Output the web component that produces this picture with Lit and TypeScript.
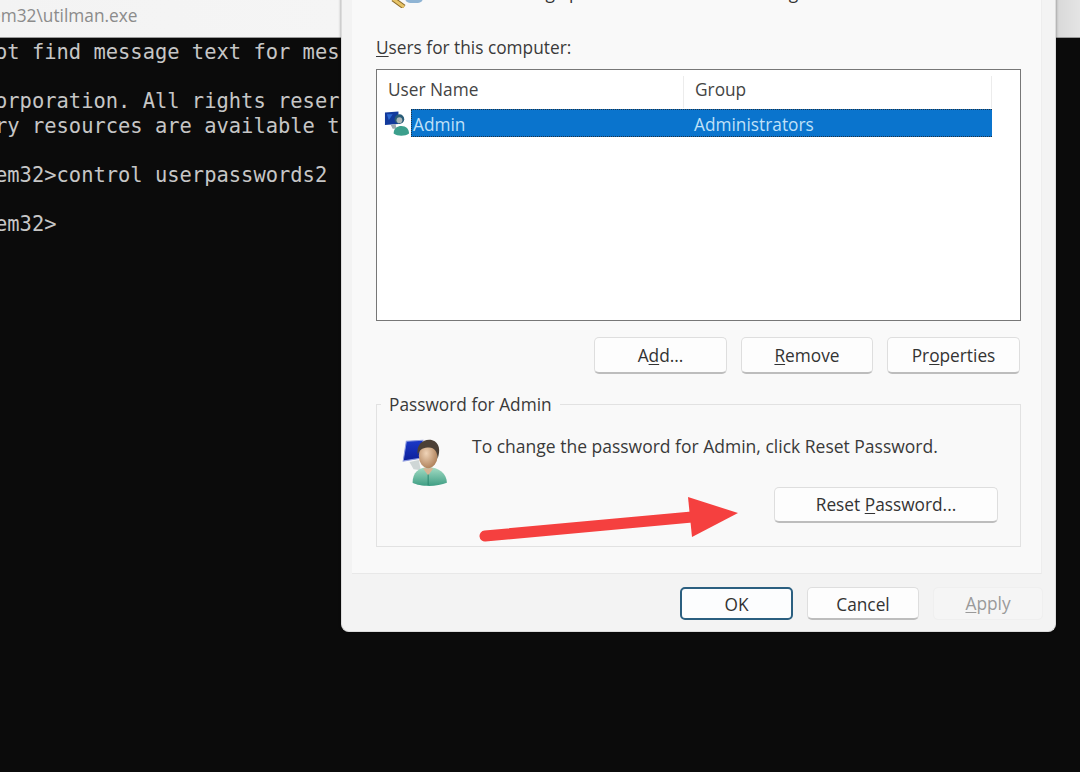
import { LitElement, html, css } from "lit";
import { customElement } from "lit/decorators.js";

const userIcon = html`
  <svg class="user" width="52" height="52" viewBox="0 0 50 50" aria-hidden="true">
    <defs>
      <linearGradient id="scr" x1="0" y1="0" x2="0" y2="1">
        <stop offset="0" stop-color="#1b39c8" />
        <stop offset="1" stop-color="#0d1f9a" />
      </linearGradient>
      <radialGradient id="face" cx="0.4" cy="0.4" r="0.7">
        <stop offset="0" stop-color="#f0d4b8" />
        <stop offset="1" stop-color="#a87850" />
      </radialGradient>
      <linearGradient id="shirt" x1="0" y1="0" x2="0" y2="1">
        <stop offset="0" stop-color="#a4dcc4" />
        <stop offset="1" stop-color="#3f9e84" />
      </linearGradient>
    </defs>
    <path d="M8 6 L24 5 L24 22 L5 25 Z" fill="url(#scr)" stroke="#8d9be0" stroke-width="1" />
    <path d="M11 26 L20 24 L22 34 L15 33 Z" fill="#cfd6d6" />
    <path d="M14 46 C14 36 20 31 29 31 C39 31 47 37 47 46 C38 50 21 50 14 46 Z" fill="url(#shirt)" />
    <path d="M24 32 L29 39 L34 32 Z" fill="#d8b494" />
    <path d="M29 38 L29 48" stroke="#2f8a72" stroke-width="1" />
    <ellipse cx="29" cy="20" rx="9" ry="12" fill="url(#face)" />
    <path d="M19 19 C17 8 26 3 33 5 C40 7 41 15 38 23 C38 16 35 12 30 12 C25 12 21 13 19 19 Z" fill="#4c4036" />
  </svg>
`;

const smallIcon = html`
  <svg width="26" height="27" viewBox="0 0 27 27" aria-hidden="true">
    <path d="M1 2 L15 1 L15 14 L1 15 Z" fill="#123a9c" />
    <path d="M3 4 L9 4 L5 10 Z" fill="#2b68d0" />
    <path d="M7 15 L12 14 L13 19 L9 19 Z" fill="#9aa8b0" />
    <circle cx="16" cy="9" r="5" fill="#2a5d78" />
    <circle cx="16" cy="10" r="3" fill="#aeb8b8" />
    <path d="M10 24 C10 18 14 16 18 16 C23 16 26 19 26 24 C22 27 14 27 10 24 Z" fill="#3c9f8c" />
  </svg>
`;

@customElement("app-root")
export class AppRoot extends LitElement {
  static styles = css`
    :host {
      display: block;
      width: 1080px;
      height: 772px;
      position: relative;
      overflow: hidden;
      background: #0b0b0b;
      font-family: "Open Sans", "Noto Sans", sans-serif;
      color: #333;
    }
    .terminal {
      display: flex;
      flex-direction: column;
      height: 100%;
    }
    .titlebar {
      height: 38px;
      flex: none;
      box-sizing: border-box;
      background: linear-gradient(90deg, #f3f3f3 0, #f5f5f5 340px, #d8d8d8 1056px, #e4e4e4 1080px);
      border-bottom: 1px solid #9a9a9a;
      display: flex;
      align-items: center;
      overflow: hidden;
      white-space: nowrap;
    }
    .titlebar span {
      margin-left: -9px;
      margin-bottom: 6px;
      font-size: 17.3px;
      color: #8b8b8b;
    }
    .console {
      flex: 1;
      padding: 2px 0 0;
      font-family: "DejaVu Sans Mono", "Liberation Mono", monospace;
      font-size: 20.45px;
      line-height: 24.65px;
      color: #c6c6c6;
      white-space: nowrap;
      overflow: hidden;
      width: 341px;
    }
    .console div {
      height: 24.65px;
      margin-left: -5px;
    }
    .dialog {
      position: absolute;
      left: 341px;
      top: -40px;
      width: 715px;
      height: 672px;
      box-sizing: border-box;
      background: #f3f3f3;
      border-radius: 0 0 8px 8px;
      border: 1px solid #dcdcdc;
      border-top: none;
      box-shadow: 0 0 3px rgba(0, 0, 0, 0.45);
      display: flex;
      flex-direction: column;
    }
    .page {
      flex: 1;
      box-sizing: border-box;
      margin: 0 13px 0 10px;
      border-right: 1px solid #ededed;
      border-bottom: 1px solid #e8e8e8;
      padding: 0 20px 26px 24px;
      display: flex;
      flex-direction: column;
      background: #f9f9f9;
    }
    .intro {
      height: 40px;
      flex: none;
      display: flex;
      align-items: flex-end;
      gap: 24px;
      margin-left: 14px;
      font-size: 17.3px;
      line-height: 24px;
      color: #333;
      white-space: nowrap;
    }
    .keys {
      flex: none;
      margin-bottom: -8px;
    }
    .intro span {
      margin-bottom: -5px;
    }
    .label {
      height: 69px;
      box-sizing: border-box;
      flex: none;
      padding-top: 38px;
      font-size: 17.3px;
      line-height: 20px;
      color: #3a3a3a;
    }
    u {
      text-underline-offset: 2px;
      text-decoration-thickness: 1px;
    }
    .list {
      box-sizing: border-box;
      height: 252px;
      flex: none;
      border: 1.5px solid #777;
      background: #fff;
      padding: 0 28px 0 6px;
    }
    .head {
      display: grid;
      grid-template-columns: 301px 1fr;
      height: 39px;
      font-size: 17.3px;
      color: #444;
    }
    .head div {
      height: 32px;
      line-height: 28px;
      margin-top: 6px;
      padding-left: 5px;
      border-right: 1px solid #ececec;
      white-space: nowrap;
    }
    .head div + div {
      padding-left: 11px;
    }
    .row {
      display: grid;
      grid-template-columns: 27px 1fr;
      height: 28px;
      align-items: stretch;
      font-size: 17.3px;
      color: #bfe0f8;
      margin-left: 1px;
    }
    .row .ico {
      display: flex;
      align-items: center;
    }
    .sel {
      display: grid;
      grid-template-columns: 281px 1fr;
      background: #0a74cd;
      align-items: center;
      border: 1px dotted #234;
      border-right: none;
      padding-top: 2px;
      box-sizing: border-box;
    }
    .sel div {
      padding-left: 1px;
    }
    .buttons {
      display: flex;
      justify-content: flex-end;
      gap: 14px;
      margin-top: 16px;
      margin-right: 1px;
    }
    .btn {
      box-sizing: border-box;
      display: flex;
      align-items: center;
      justify-content: center;
      height: 37px;
      width: 133px;
      background: #fdfdfd;
      border: 1px solid #dedede;
      border-bottom: 2px solid #bdbdbd;
      border-radius: 5px;
      font-size: 17.3px;
      color: #333;
    }
    .buttons .narrow {
      width: 132px;
    }
    .group {
      margin-top: 30px;
      box-sizing: border-box;
      height: 143px;
      flex: none;
      position: relative;
      border: 1px solid #e2e2e2;
      padding: 30px 22px 0 21px;
      display: flex;
      flex-direction: column;
    }
    .legend {
      position: absolute;
      left: 4px;
      top: -10px;
      padding: 0 8px;
      background: #f9f9f9;
      font-size: 17.3px;
      line-height: 20px;
      color: #3a3a3a;
    }
    .info {
      display: flex;
      gap: 22px;
      font-size: 17.5px;
      line-height: 22px;
      color: #3a3a3a;
      white-space: nowrap;
      height: 52px;
    }
    .user {
      display: block;
      flex: none;
    }
    .reset {
      align-self: flex-end;
      width: 224px;
      height: 36px;
    }
    .footer {
      height: 58px;
      flex: none;
      box-sizing: border-box;
      display: flex;
      justify-content: flex-end;
      align-items: center;
      gap: 14px;
      padding: 0 12px 0 0;
    }
    .footer .btn {
      width: 112px;
      height: 33px;
      padding-top: 4px;
    }
    .footer .ok {
      width: 113px;
      border: 2px solid #2b5f80;
      background: #fcfdfe;
      padding-top: 2px;
    }
    .footer .apply {
      width: 110px;
      color: #9a9a9a;
      background: #f5f5f5;
      border: 1px solid #efefef;
      padding-top: 0;
    }
    .arrow {
      position: absolute;
      left: 476px;
      top: 495px;
    }
  `;

  render() {
    return html`
      <div class="terminal">
        <div class="titlebar"><span>em32\\utilman.exe</span></div>
        <div class="console">
          <div>ot find message text for mes</div>
          <div></div>
          <div>orporation. All rights reser</div>
          <div>ry resources are available t</div>
          <div></div>
          <div>em32&gt;control userpasswords2</div>
          <div></div>
          <div>em32&gt;</div>
        </div>
      </div>

      <div class="dialog">
        <div class="page">
          <div class="intro">
            <svg class="keys" width="36" height="34" viewBox="0 0 36 34" aria-hidden="true">
              <rect x="15" y="8" width="18" height="21" rx="5" fill="#8fb4d4" />
              <path d="M3 25 L14 33" stroke="#8a6a2a" stroke-width="5" />
              <path d="M3 25 L14 33" stroke="#e7c468" stroke-width="3" />
            </svg>
            <span>and to change passwords and other settings.</span>
          </div>
          <div class="label"><u>U</u>sers for this computer:</div>
          <div class="list">
            <div class="head">
              <div>User Name</div>
              <div>Group</div>
            </div>
            <div class="row">
              <div class="ico">${smallIcon}</div>
              <div class="sel">
                <div>Admin</div>
                <div>Administrators</div>
              </div>
            </div>
          </div>
          <div class="buttons">
            <div class="btn"><span>A<u>d</u>d...</span></div>
            <div class="btn narrow"><span><u>R</u>emove</span></div>
            <div class="btn"><span>Pr<u>o</u>perties</span></div>
          </div>
          <div class="group">
            <div class="legend">Password for Admin</div>
            <div class="info">
              ${userIcon}
              <span>To change the password for Admin, click Reset Password.</span>
            </div>
            <div class="btn reset"><span>Reset <u>P</u>assword...</span></div>
          </div>
        </div>
        <div class="footer">
          <div class="btn ok"><span>OK</span></div>
          <div class="btn"><span>Cancel</span></div>
          <div class="btn apply"><span><u>A</u>pply</span></div>
        </div>
      </div>

      <svg class="arrow" width="270" height="50" viewBox="0 0 270 50" aria-hidden="true">
        <path d="M9 41 L216 22" stroke="#f5403f" stroke-width="11" stroke-linecap="round" fill="none" />
        <path d="M212 2 L262 18 L216 42 Z" fill="#f5403f" />
      </svg>
    `;
  }
}
